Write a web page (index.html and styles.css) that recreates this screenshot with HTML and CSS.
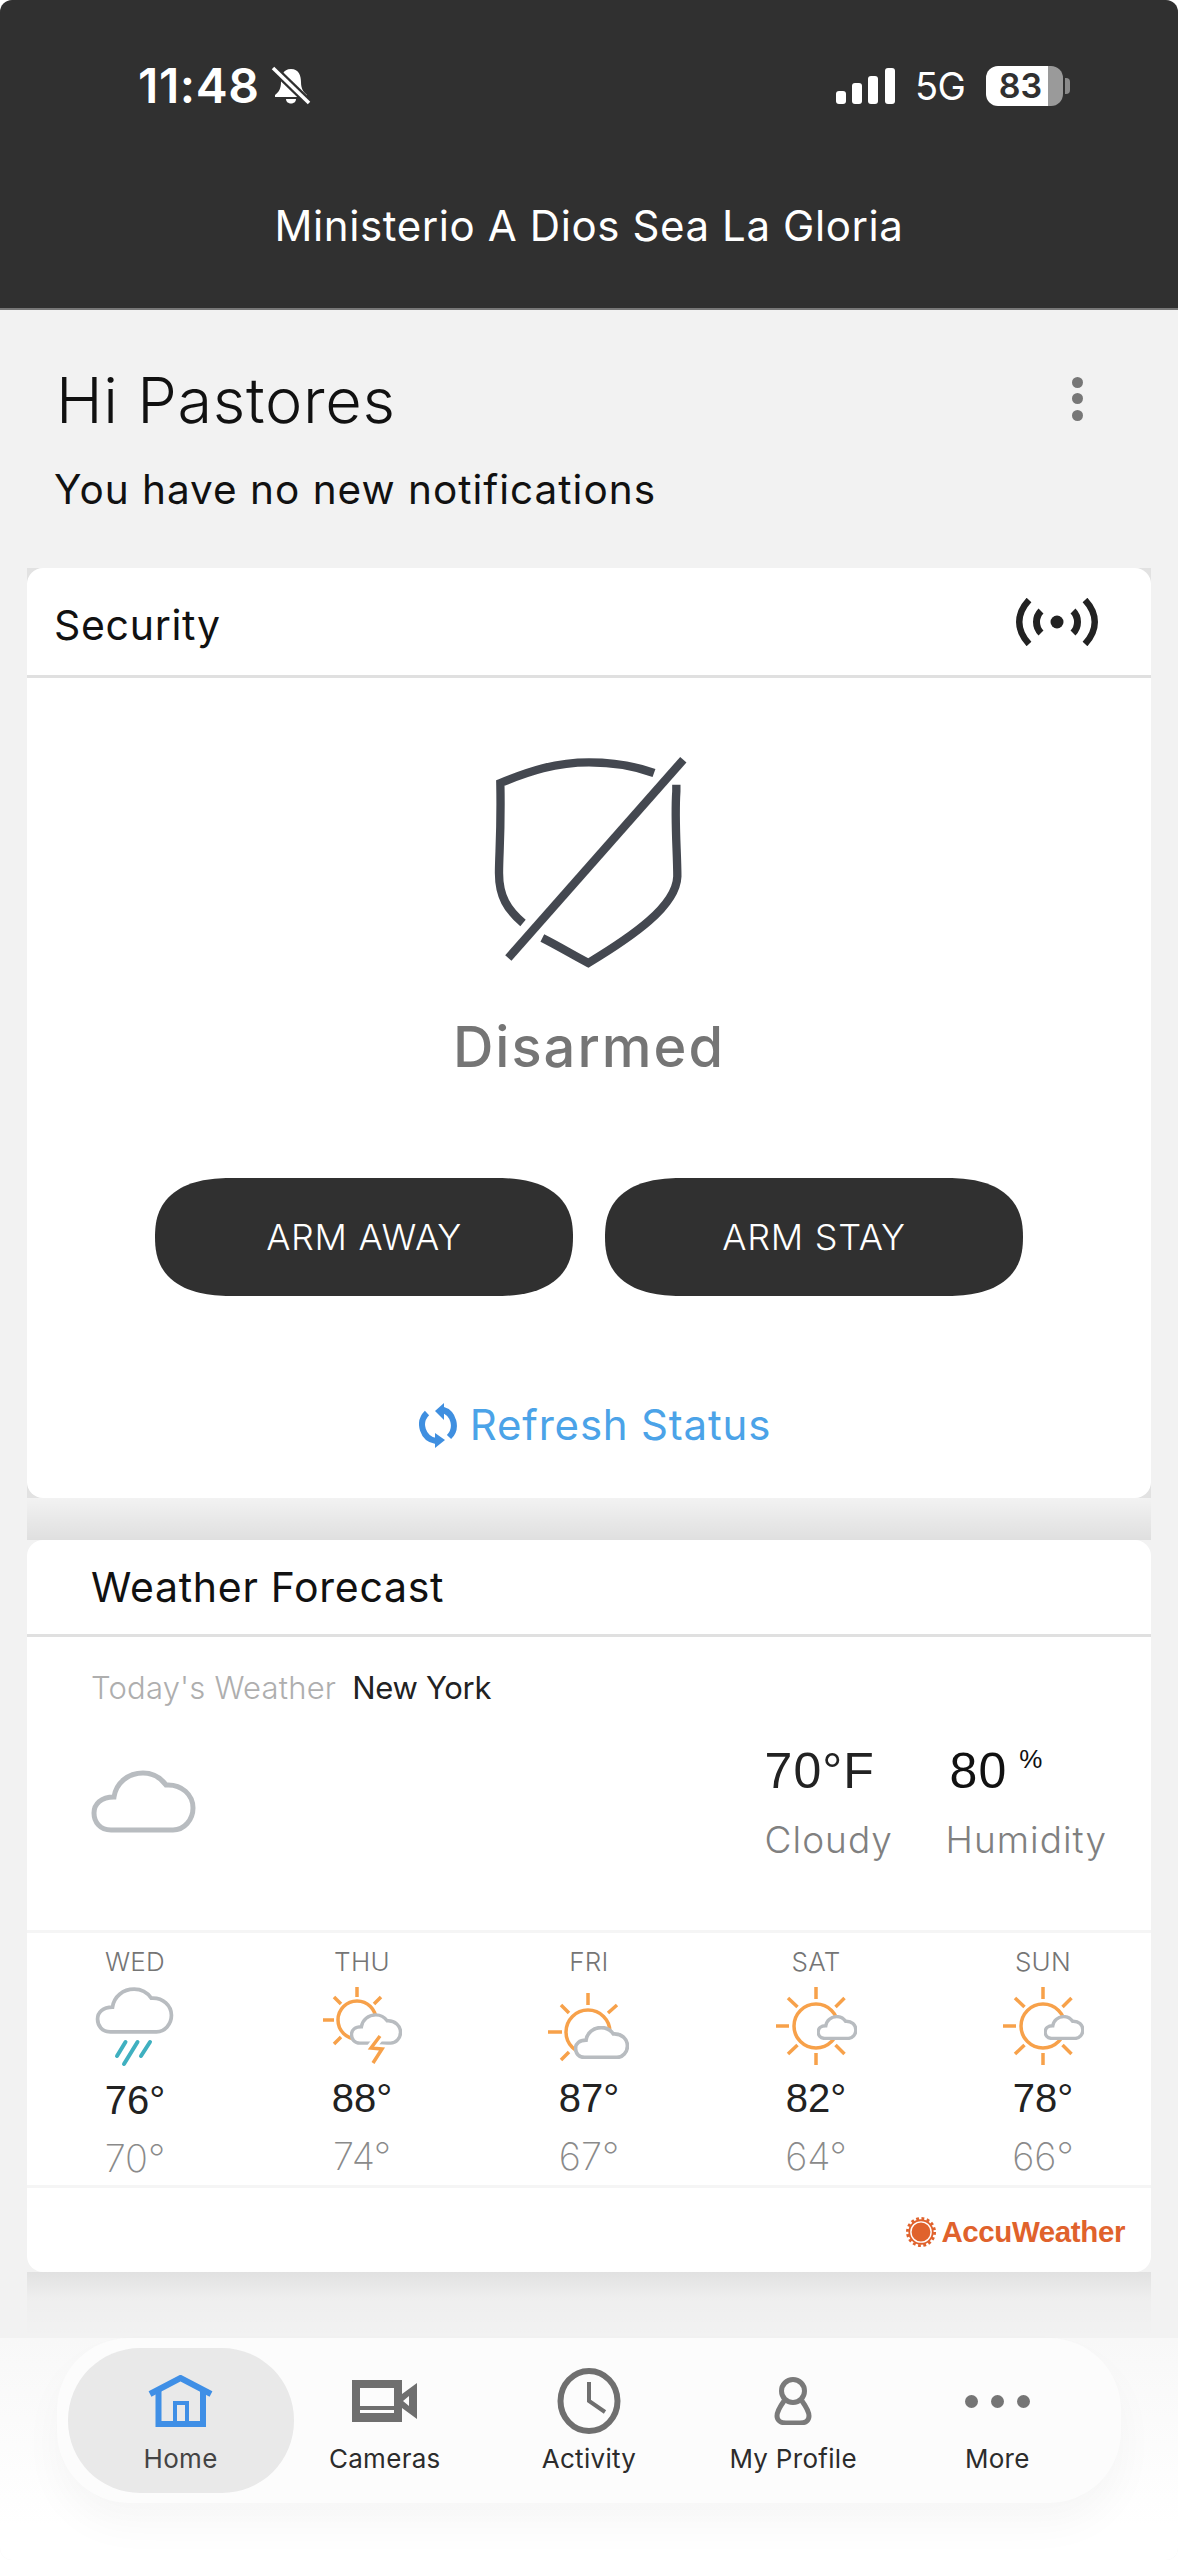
FILE: index.html
```html
<!DOCTYPE html>
<html lang="en">
<head>
<meta charset="utf-8">
<title>Home</title>
<link rel="stylesheet" href="styles.css">
</head>
<body>
<div class="phone">
  <header class="top">
    <div class="status">
      <div class="status-left">
        <span class="time">11:48</span>
        <svg class="bell" viewBox="0 0 40 40"><path class="fill-w" d="M20 3C12 3 10 10 10 16C10 22 8 26 4 29V31H36V29C32 26 30 22 30 16C30 10 28 3 20 3Z"/><path class="fill-w" d="M15 33C15 39 25 39 25 33Z"/><path class="slash-bg" d="M2 2L38 37"/><path class="slash-fg" d="M2 2L38 37"/></svg>
      </div>
      <div class="status-right">
        <svg class="signal" viewBox="0 0 59 36"><rect class="fill-w" x="0" y="23" width="10" height="13" rx="3"/><rect class="fill-w" x="16" y="15" width="10" height="21" rx="3"/><rect class="fill-w" x="32" y="8" width="10" height="28" rx="3"/><rect class="fill-w" x="49" y="0" width="10" height="36" rx="3"/></svg>
        <span class="net">5G</span>
        <span class="battery">83</span>
        <span class="nub"></span>
      </div>
    </div>
    <h1 class="site">Ministerio A Dios Sea La Gloria</h1>
  </header>

  <main class="content">
    <div class="greet">
      <h2 class="hi">Hi Pastores</h2>
      <div class="kebab"><i></i><i></i><i></i></div>
    </div>
    <p class="notes">You have no new notifications</p>

    <section class="security">
      <div class="security-inner">
        <div class="card-head sec-head">
          <span class="card-title">Security</span>
          <svg class="radio" viewBox="0 0 82 48"><circle cx="41" cy="24" r="6.5"/><path d="M25 13C19 19 19 29 25 35"/><path d="M57 13C63 19 63 29 57 35"/><path class="outer" d="M13 2C0 16 0 32 13 46"/><path class="outer" d="M69 2C82 16 82 32 69 46"/></svg>
        </div>
        <div class="sec-body">
          <svg class="shield" viewBox="270 100 600 660"><path d="M372 610C325 570 300 530 300 460C300 400 307 340 304 190C390 155 470 128 570 128C650 128 710 140 765 160"/><path d="M832 195V215C826 300 835 400 835 470C832 560 700 650 568 730C520 705 480 680 430 655"/><path d="M853 120L328 715"/></svg>
          <div class="state">Disarmed</div>
          <div class="arm-row">
            <button class="arm">ARM AWAY</button>
            <button class="arm">ARM STAY</button>
          </div>
          <div class="refresh">
            <svg class="refresh-icon" viewBox="0 0 38 45"><path class="arc" d="M23 6.5A16.5 16.5 0 0 1 30 34"/><path class="arc" d="M17 38A16.5 16.5 0 0 1 8 10"/><path class="head" d="M16 8L25 0V17Z"/><path class="head" d="M16 30V45L26 37Z"/></svg>
            <span>Refresh Status</span>
          </div>
        </div>
      </div>
    </section>

    <section class="weather">
      <div class="card-head wx-head"><span class="card-title">Weather Forecast</span></div>
      <div class="today"><span class="today-label">Today's Weather</span><span class="city">New York</span></div>
      <div class="current">
        <svg class="cloud-big" viewBox="0 0 105 63"><path class="cloud" d="M20 60C9 60 3 52 3 43C3 34 10 27 23 27C25 13 37 3 52 3C62 3 70 8 75 15C91 14 102 25 102 38C102 50 93 60 82 60Z"/></svg>
        <div class="readings">
          <div class="reading reading-temp"><div class="big">70°F</div><div class="sub">Cloudy</div></div>
          <div class="reading"><div class="big big-hum">80<sup class="pct">%</sup></div><div class="sub">Humidity</div></div>
        </div>
      </div>
      <div class="forecast">
        <div class="day">
          <div class="dow">WED</div>
          <svg class="wx wx-tall" viewBox="0 0 90 82"><svg x="5" y="1" width="79" height="47" viewBox="0 0 105 63"><path class="cloud" d="M20 60C9 60 3 52 3 43C3 34 10 27 23 27C25 13 37 3 52 3C62 3 70 8 75 15C91 14 102 25 102 38C102 50 93 60 82 60Z"/></svg><path class="rain" d="M35.5 56L27 70M47.5 56L34 78M60 56L51 70"/></svg>
          <div class="high">76°</div><div class="low">70°</div>
        </div>
        <div class="day">
          <div class="dow">THU</div>
          <svg class="wx" viewBox="0 0 90 80"><circle class="sun" cx="40" cy="34" r="19"/><path class="sun" d="M40 1V11M6 34H17M17 11L24 18M64 11L57 18M17 58L24 51"/><svg x="33" y="27" width="52" height="32" viewBox="0 0 105 63"><path class="cloud thick" d="M20 60C9 60 3 52 3 43C3 34 10 27 23 27C25 13 37 3 52 3C62 3 70 8 75 15C91 14 102 25 102 38C102 50 93 60 82 60Z"/></svg><path class="bolt-bg" d="M63 50L54 62L65 63L56 77"/><path class="sun" d="M63 50L54 62L65 63L56 77"/></svg>
          <div class="high">88°</div><div class="low">74°</div>
        </div>
        <div class="day">
          <div class="dow">FRI</div>
          <svg class="wx" viewBox="0 0 90 80"><circle class="sun" cx="44" cy="46" r="22"/><path class="sun" d="M44 7V19M4 46H18M17 19L25 27M73 19L64 27M17 74L25 66"/><svg x="30" y="40" width="55" height="33" viewBox="0 0 105 63"><path class="cloud thick" d="M20 60C9 60 3 52 3 43C3 34 10 27 23 27C25 13 37 3 52 3C62 3 70 8 75 15C91 14 102 25 102 38C102 50 93 60 82 60Z"/></svg></svg>
          <div class="high">87°</div><div class="low">67°</div>
        </div>
        <div class="day">
          <div class="dow">SAT</div>
          <svg class="wx" viewBox="0 0 90 80"><circle class="sun" cx="45" cy="40" r="22"/><path class="sun" d="M45 1V13M45 67V79M5 40H18M17 12L26.500 21M73.500 12L64.500 21M17 68L26.500 59M73.500 68L64.500 59"/><svg x="46" y="29" width="40" height="25" viewBox="0 0 105 63"><path class="cloud thicker" d="M20 60C9 60 3 52 3 43C3 34 10 27 23 27C25 13 37 3 52 3C62 3 70 8 75 15C91 14 102 25 102 38C102 50 93 60 82 60Z"/></svg></svg>
          <div class="high">82°</div><div class="low">64°</div>
        </div>
        <div class="day">
          <div class="dow">SUN</div>
          <svg class="wx" viewBox="0 0 90 80"><circle class="sun" cx="45" cy="40" r="22"/><path class="sun" d="M45 1V13M45 67V79M5 40H18M17 12L26.500 21M73.500 12L64.500 21M17 68L26.500 59M73.500 68L64.500 59"/><svg x="46" y="29" width="40" height="25" viewBox="0 0 105 63"><path class="cloud thicker" d="M20 60C9 60 3 52 3 43C3 34 10 27 23 27C25 13 37 3 52 3C62 3 70 8 75 15C91 14 102 25 102 38C102 50 93 60 82 60Z"/></svg></svg>
          <div class="high">78°</div><div class="low">66°</div>
        </div>
      </div>
      <div class="credit">
        <svg class="accu-sun" viewBox="0 0 32 32"><circle class="accu-fill" cx="16" cy="16" r="13.500"/><circle class="accu-teeth" cx="16" cy="16" r="14.500"/><circle class="accu-ring" cx="16" cy="16" r="10.800"/></svg>
        <span class="accu">AccuWeather</span>
      </div>
    </section>
  </main>

  <footer class="dock">
    <nav class="nav">
      <div class="nav-item active">
        <div class="nav-icon"><svg class="ic-home" viewBox="0 0 65 52"><path d="M2 19L32.500 3L63 19"/><path d="M10.500 13V49H55V13"/><path class="door" d="M27 49V28H39V49"/></svg></div>
        <span class="nav-label">Home</span>
      </div>
      <div class="nav-item">
        <div class="nav-icon"><svg class="ic-cam" viewBox="0 0 65 42"><path fill-rule="evenodd" d="M0 0H50V42H0ZM8 8V26H42V8ZM8 30V33H42V30Z"/><path fill-rule="evenodd" d="M50 14L65 3V39L50 28ZM51 21L57 16V26Z"/></svg></div>
        <span class="nav-label">Cameras</span>
      </div>
      <div class="nav-item">
        <div class="nav-icon"><svg class="ic-clock" viewBox="0 0 64 66"><ellipse cx="32" cy="33" rx="28.500" ry="30"/><path d="M32 14V33L48 44"/></svg></div>
        <span class="nav-label">Activity</span>
      </div>
      <div class="nav-item">
        <div class="nav-icon"><svg class="ic-user" viewBox="0 0 38 48"><ellipse cx="19" cy="14" rx="11.500" ry="11.500"/><path d="M10 24C5 31 3 35 3 39C3 44 8 46 12 46H26C31 46 35 44 35 39C35 35 33 31 28 24"/></svg></div>
        <span class="nav-label">My Profile</span>
      </div>
      <div class="nav-item">
        <div class="nav-icon"><div class="dots"><i></i><i></i><i></i></div></div>
        <span class="nav-label">More</span>
      </div>
    </nav>
  </footer>
</div>
</body>
</html>
```
FILE: styles.css
```css
* { box-sizing: border-box; }
html, body { margin: 0; padding: 0; background: #fff; }
body { font-family: "Inter", "Noto Sans", sans-serif; }
.phone { width: 1178px; height: 2560px; display: flex; flex-direction: column; overflow: hidden; border-radius: 12px; background: #f2f2f2; }

/* header */
.top { height: 310px; background: #303030; color: #fff; padding-top: 66px; border-bottom: 2px solid #777; }
.status { display: flex; justify-content: space-between; height: 40px; padding: 0 108px 0 138px; }
.status-left, .status-right { display: flex; align-items: center; }
.time { font-size: 48px; font-weight: 600; letter-spacing: 0.6px; line-height: 40px; }
.bell { width: 40px; height: 40px; margin-left: 11px; }
.fill-w { fill: #fff; }
.slash-bg { stroke: #303030; stroke-width: 8; fill: none; }
.slash-fg { stroke: #fff; stroke-width: 3.5; fill: none; }
.signal { width: 59px; height: 36px; margin-top: 0; }
.net { font-size: 38px; margin-left: 20px; width: 51px; letter-spacing: -0.5px; line-height: 40px; }
.battery { width: 77px; height: 40px; margin-left: 20px; border-radius: 12px; background: linear-gradient(90deg, #fff 81%, #9a9a9a 81%); color: #303030; font-size: 34px; font-weight: 600; line-height: 40px; text-align: center; padding-right: 8px; }
.nub { width: 5px; height: 16px; margin-left: 2px; background: #8a8a8a; border-radius: 0 4px 4px 0; }
.site { margin: 95px 0 0; font-size: 42px; font-weight: 400; line-height: 50px; text-align: center; letter-spacing: 0.6px; }

/* main */
.content { flex: 1; min-height: 0; display: flex; flex-direction: column; }
.greet { display: flex; justify-content: space-between; align-items: center; height: 70px; margin-top: 55px; padding: 0 95px 0 56px; }
.hi { margin: 0; font-size: 63px; font-weight: 300; line-height: 70px; color: #111; letter-spacing: 0.7px; }
.kebab { display: flex; flex-direction: column; gap: 5.500px; margin-top: -3px; }
.kebab i { width: 11px; height: 11px; border-radius: 50%; background: #777; display: block; }
.notes { margin: 30px 0 0; padding-left: 54px; font-size: 40.500px; line-height: 50px; color: #111; font-weight: 400; letter-spacing: 1px; }

.security { margin: 53px 27px 0; background: #e2e2e2; }
.security-inner { background: #fff; border-radius: 16px; overflow: hidden; height: 930px; }
.card-head { display: flex; align-items: center; justify-content: space-between; border-bottom: 3px solid #e0e0e0; }
.sec-head { height: 110px; padding: 0 53px 0 27px; }
.card-title { font-size: 41px; color: #111; line-height: 50px; letter-spacing: 0.7px; padding-top: 6px; }
.radio { width: 82px; height: 48px; fill: #222; }
.radio path { fill: none; stroke: #222; stroke-width: 7; }
.radio .outer { stroke-width: 6.500; }
.sec-body { display: flex; flex-direction: column; align-items: center; }
.shield { width: 200px; height: 220px; margin-top: 75px; fill: none; stroke: #444850; stroke-width: 25; }
.state { margin-top: 39px; font-size: 56px; font-weight: 500; line-height: 70px; color: #757575; letter-spacing: 2px; }
.arm-row { display: flex; gap: 32px; margin-top: 96px; }
.arm { width: 418px; height: 118px; border: 0; border-radius: 68px / 59px; background: #303030; color: #fff; font-family: inherit; font-size: 36px; font-weight: 300; letter-spacing: 0.7px; padding: 0; }
@supports (corner-shape: superellipse(1.3)) {
  .arm { border-radius: 78px / 59px; corner-shape: superellipse(1.3); }
}
.refresh { display: flex; align-items: center; gap: 13px; height: 50px; margin: 104px 0 0 12px; color: #4ba3e8; font-size: 42px; line-height: 50px; letter-spacing: 0.8px; }
.refresh-icon { width: 38px; height: 45px; }
.arc { fill: none; stroke: #3f8fe0; stroke-width: 6; }
.head { fill: #3f8fe0; }

/* weather */
.weather { position: relative; margin: 42px 27px 0; background: #fff; border-radius: 16px; height: 732px; }
.weather::before { content: ""; position: absolute; left: 0; right: 0; top: -42px; height: 42px; background: linear-gradient(180deg, rgba(0,0,0,0), rgba(0,0,0,0.08)); }
.weather::after { content: ""; position: absolute; left: 0; right: 0; bottom: -66px; height: 66px; background: linear-gradient(180deg, rgba(0,0,0,0.07), rgba(0,0,0,0.015) 40%, rgba(0,0,0,0)); pointer-events: none; }
.wx-head { height: 97px; padding: 0 0 0 64px; }
.wx-head .card-title { padding-top: 0; }
.today { display: flex; gap: 16px; padding-left: 64px; margin-top: 31px; font-size: 31px; line-height: 40px; }
.today-label { color: #aeaeae; font-weight: 300; letter-spacing: 0.2px; }
.city { color: #222; letter-spacing: -0.3px; }
.current { display: flex; justify-content: space-between; align-items: flex-start; margin-top: 33px; padding: 0 44px 65px 64px; border-bottom: 3px solid #f5f5f5; height: 192px; }
.cloud-big { width: 105px; height: 63px; margin-top: 29px; }
.cloud { fill: #fff; stroke: #b8bcc0; stroke-width: 5; }
.thick { stroke-width: 7; }
.thicker { stroke-width: 9; }
.readings { display: flex; gap: 60px; }
.reading-temp { width: 121px; }
.big { font-family: "Liberation Sans", Arial, sans-serif; font-size: 50px; line-height: 60px; color: #222; white-space: nowrap; letter-spacing: 1px; }
.big-hum { padding-left: 4px; color: #111; }
.pct { font-size: 26px; margin-left: 12px; vertical-align: 20px; line-height: 0; letter-spacing: 0; }
.sub { margin-top: 14px; font-size: 37px; line-height: 50px; color: #808080; font-weight: 300; letter-spacing: 1px; }
.forecast { display: flex; justify-content: center; height: 255px; padding-top: 11px; border-bottom: 3px solid #f5f5f5; }
.day { flex: 0 0 227px; display: flex; flex-direction: column; align-items: center; }
.dow { font-size: 26px; line-height: 36px; color: #757575; font-weight: 300; letter-spacing: 0.3px; }
.wx { width: 90px; height: 80px; margin-top: 6px; }
.wx-tall { height: 82px; }
.sun { fill: none; stroke: #f7a14a; stroke-width: 3.500; }
.rain { fill: none; stroke: #3fb0c0; stroke-width: 4; stroke-linecap: round; }
.bolt-bg { fill: none; stroke: #fff; stroke-width: 9; }
.high { margin-top: 10px; font-family: "Liberation Sans", Arial, sans-serif; font-size: 40px; line-height: 44px; color: #222; }
.low { margin-top: 14px; font-size: 38px; line-height: 44px; color: #8a8a8a; font-weight: 200; }
.credit { display: flex; align-items: center; justify-content: flex-end; gap: 5px; height: 84px; padding: 4px 26px 0 0; }
.accu-sun { width: 30px; height: 30px; }
.accu-fill { fill: #e0622c; }
.accu-teeth { fill: none; stroke: #e0622c; stroke-width: 3; stroke-dasharray: 3 2.700; }
.accu-ring { fill: none; stroke: #fff; stroke-width: 1.500; }
.accu { font-family: "Liberation Sans", Arial, sans-serif; font-size: 29.500px; font-weight: 700; color: #e0622c; letter-spacing: -0.4px; line-height: 32px; }

/* dock */
.dock { height: 222px; background: linear-gradient(180deg, #f8f8f8, #fff 85%); padding: 0 57px; }
.nav { display: grid; grid-template-columns: repeat(5, 204.200px); height: 165px; padding-left: 21.500px; background: #fcfcfc; border-radius: 72px; box-shadow: 0 22px 40px rgba(0,0,0,0.035); }
.nav-item { position: relative; z-index: 0; display: flex; flex-direction: column; align-items: center; padding-top: 25px; }
.nav-item.active::before { content: ""; position: absolute; z-index: -1; left: -11px; right: -11px; top: 10px; bottom: 10px; background: #e9e9e9; border-radius: 72px; }
.nav-icon { height: 76px; display: flex; align-items: center; justify-content: center; }
.nav-label { margin-top: 2px; font-size: 26px; line-height: 36px; color: #2c2c2c; letter-spacing: 0.3px; }
.active .nav-label { color: #444; }
.ic-home { width: 65px; height: 52px; fill: none; stroke: #3f8fe6; stroke-width: 6; }
.ic-home .door { stroke-width: 4; }
.ic-cam { width: 65px; height: 42px; fill: #6f6f6f; }
.ic-clock { width: 64px; height: 66px; fill: none; stroke: #6f6f6f; stroke-width: 6; }
.ic-clock path { stroke-width: 4; }
.ic-user { width: 38px; height: 48px; fill: none; stroke: #7a7a7a; stroke-width: 5; }
.dots { display: flex; gap: 13px; }
.dots i { width: 13px; height: 13px; border-radius: 50%; background: #757575; display: block; }
```
